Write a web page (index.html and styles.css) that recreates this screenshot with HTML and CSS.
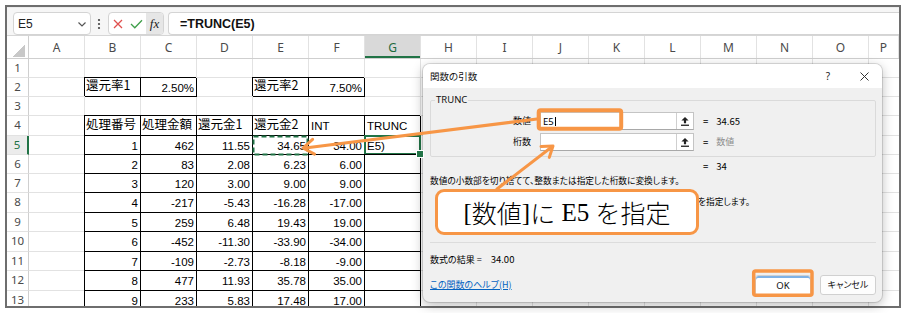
FILE: index.html
```html
<!DOCTYPE html>
<html lang="ja">
<head>
<meta charset="utf-8">
<title>TRUNC</title>
<link rel="stylesheet" href="styles.css">
</head>
<body>
<div class="frame">
  <div class="fbar">
    <div class="namebox"><span>E5</span><svg class="chev" width="8" height="5" viewBox="0 0 8 5"><polyline points="0.5,0.5 4,4 7.5,0.5" fill="none" stroke="#555" stroke-width="1.2"/></svg></div>
    <svg class="dots" width="4" height="12" viewBox="0 0 4 12"><circle cx="2" cy="2" r="1.1" fill="#444"/><circle cx="2" cy="6" r="1.1" fill="#444"/><circle cx="2" cy="10" r="1.1" fill="#444"/></svg>
    <div class="fbtns">
      <svg class="bx-x" width="10" height="10" viewBox="0 0 10 10"><path d="M1 1 L9 9 M9 1 L1 9" stroke="#e0504f" stroke-width="1.3" fill="none"/></svg>
      <svg class="bx-ok" width="13" height="10" viewBox="0 0 13 10"><path d="M1 5 L4.8 8.8 L12 1.2" stroke="#3f9f4a" stroke-width="1.3" fill="none"/></svg>
      <span class="fx">fx</span>
    </div>
    <div class="finput">=TRUNC(E5)</div>
  </div>
  <div class="sheet">
    <div class="hdr">
      <div class="corner"><span class="tri"></span></div>
      <div>A</div><div>B</div><div>C</div><div>D</div><div>E</div><div>F</div><div class="hsel">G</div><div>H</div><div>I</div><div>J</div><div>K</div><div>L</div><div>M</div><div>N</div><div>O</div><div>P</div>
    </div>
    <div class="row"><div class="rh">1</div></div>
    <div class="row"><div class="rh">2</div><div class="c cb bx j">還元率1</div><div class="c cc bx num">2.50%</div><div class="c ce bx j">還元率2</div><div class="c cf bx num">7.50%</div></div>
    <div class="row"><div class="rh">3</div></div>
    <div class="row h20"><div class="rh">4</div><div class="c cb bx j">処理番号</div><div class="c cc bx j">処理金額</div><div class="c cd bx j">還元金1</div><div class="c ce bx j">還元金2</div><div class="c cf bx">INT</div><div class="c cg bx">TRUNC</div></div>
    <div class="row"><div class="rh rsel">5</div><div class="c cb bx num">1</div><div class="c cc bx num">462</div><div class="c cd bx num">11.55</div><div class="c ce bx num">34.65</div><div class="c cf bx num">34.00</div><div class="c cg bx act">E5)</div></div>
    <div class="row"><div class="rh">6</div><div class="c cb bx num">2</div><div class="c cc bx num">83</div><div class="c cd bx num">2.08</div><div class="c ce bx num">6.23</div><div class="c cf bx num">6.00</div><div class="c cg bx"></div></div>
    <div class="row"><div class="rh">7</div><div class="c cb bx num">3</div><div class="c cc bx num">120</div><div class="c cd bx num">3.00</div><div class="c ce bx num">9.00</div><div class="c cf bx num">9.00</div><div class="c cg bx"></div></div>
    <div class="row h20"><div class="rh">8</div><div class="c cb bx num">4</div><div class="c cc bx num">-217</div><div class="c cd bx num">-5.43</div><div class="c ce bx num">-16.28</div><div class="c cf bx num">-17.00</div><div class="c cg bx"></div></div>
    <div class="row"><div class="rh">9</div><div class="c cb bx num">5</div><div class="c cc bx num">259</div><div class="c cd bx num">6.48</div><div class="c ce bx num">19.43</div><div class="c cf bx num">19.00</div><div class="c cg bx"></div></div>
    <div class="row h20"><div class="rh">10</div><div class="c cb bx num">6</div><div class="c cc bx num">-452</div><div class="c cd bx num">-11.30</div><div class="c ce bx num">-33.90</div><div class="c cf bx num">-34.00</div><div class="c cg bx"></div></div>
    <div class="row"><div class="rh">11</div><div class="c cb bx num">7</div><div class="c cc bx num">-109</div><div class="c cd bx num">-2.73</div><div class="c ce bx num">-8.18</div><div class="c cf bx num">-9.00</div><div class="c cg bx"></div></div>
    <div class="row h20"><div class="rh">12</div><div class="c cb bx num">8</div><div class="c cc bx num">477</div><div class="c cd bx num">11.93</div><div class="c ce bx num">35.78</div><div class="c cf bx num">35.00</div><div class="c cg bx"></div></div>
    <div class="row"><div class="rh">13</div><div class="c cb bx num">9</div><div class="c cc bx num">233</div><div class="c cd bx num">5.83</div><div class="c ce bx num">17.48</div><div class="c cf bx num">17.00</div><div class="c cg bx"></div></div>
  </div>
</div>

<div class="dlg">
  <div class="dtitle">
    <span class="dt">関数の引数</span>
    <span class="tb q">?</span>
    <span class="tb"><svg width="9" height="9" viewBox="0 0 9 9"><path d="M0.5 0.5 L8.5 8.5 M8.5 0.5 L0.5 8.5" stroke="#333" stroke-width="1"/></svg></span>
  </div>
  <div class="dbody">
    <div class="grp">
      <span class="glabel">TRUNC</span>
      <div class="arg">
        <span class="al">数値</span>
        <div class="inp"><span class="val">E5</span><i class="caret"></i><span class="cbtn"><svg width="8" height="9" viewBox="0 0 8 9"><path d="M4 0 L7.6 3.6 H5.1 V6.2 H2.9 V3.6 H0.4 Z" fill="#222"/><rect x="0" y="7.6" width="8" height="1.3" fill="#222"/></svg></span></div>
        <span class="eq">=</span><span class="av">34.65</span>
      </div>
      <div class="arg arg2">
        <span class="al">桁数</span>
        <div class="inp"><span class="val"></span><span class="cbtn"><svg width="8" height="9" viewBox="0 0 8 9"><path d="M4 0 L7.6 3.6 H5.1 V6.2 H2.9 V3.6 H0.4 Z" fill="#222"/><rect x="0" y="7.6" width="8" height="1.3" fill="#222"/></svg></span></div>
        <span class="eq">=</span><span class="av gray">数値</span>
      </div>
    </div>
    <div class="res1"><span class="eq0">=</span><span class="av">34</span></div>
    <div class="desc">数値の小数部を切り捨てて、整数または指定した桁数に変換します。</div>
    <div class="desc desc2"><b>桁数</b>　には切り捨て後の桁数を指定します。</div>
    <div class="sep"></div>
    <div class="result">数式の結果 =<span class="rv">34.00</span></div>
    <div class="foot">
      <span class="help">この関数のヘルプ(H)</span>
      <span class="btn okb">OK</span>
      <span class="btn">キャンセル</span>
    </div>
  </div>
</div>

<div class="callout"><span class="lat">[</span>数値<span class="lat">]</span>に<span class="lat"> E5 </span>を指定</div>

<svg class="ov" width="903" height="313" viewBox="0 0 903 313">
  <rect x="253.5" y="136.5" width="54" height="18" fill="none" stroke="#217346" stroke-width="2" stroke-dasharray="5 3"/>
  <g fill="none" stroke="#F79646" stroke-linecap="round" stroke-linejoin="round">
    <line x1="537" y1="119" x2="305" y2="148" stroke-width="3"/>
    <polyline points="314.5,154.1 303,148 312.6,139.3" stroke-width="3"/>
    <line x1="497" y1="189" x2="551" y2="147.5" stroke-width="3"/>
    <polyline points="541,146.4 553,146 549.3,157.4" stroke-width="3"/>
    <rect x="538.7" y="110.3" width="82.5" height="18.5" rx="2" stroke-width="4"/>
    <rect x="753.7" y="271" width="58.3" height="24.3" rx="2" stroke-width="3.5"/>
  </g>
</svg>
</body>
</html>
```

FILE: styles.css
```css
* { box-sizing: border-box; }
html, body { margin: 0; padding: 0; }
body {
  width: 903px;
  height: 313px;
  overflow: hidden;
  position: relative;
  background: #fff;
  font-family: "Noto Sans CJK JP", sans-serif;
  color: #000;
}

.frame {
  margin: 5px 0 0 5px;
  width: 896px;
  height: 303px;
  border: 2px solid #6e6e6e;
  overflow: hidden;
  display: flex;
  flex-direction: column;
  background: #fff;
}

/* formula bar */
.fbar {
  height: 29px;
  flex: none;
  display: flex;
  align-items: flex-start;
  padding: 4px 0 0 6px;
  background: #f6f6f6;
  border-top: 1px solid #ececec;
  border-bottom: 1px solid #d6d6d6;
}
.namebox {
  width: 78px;
  height: 23px;
  background: #fff;
  border: 1px solid #d4d4d4;
  border-radius: 4px;
  display: flex;
  align-items: center;
  justify-content: space-between;
  padding: 0 4px 0 4px;
  font: 12px "Liberation Sans", sans-serif;
  color: #222;
}
.chev { margin-top: 1px; }
.dots { margin: 6px 0 0 6px; }
.fbtns {
  margin-left: 7px;
  width: 56px;
  height: 23px;
  background: #fff;
  border: 1px solid #d4d4d4;
  border-radius: 4px;
  display: flex;
  align-items: center;
  padding-left: 4px;
}
.bx-ok { margin-left: 7px; }
.fx {
  margin-left: auto;
  width: 17px;
  align-self: stretch;
  background: #e6e6e6;
  border-radius: 0 3px 3px 0;
  display: flex;
  align-items: center;
  justify-content: center;
  font: italic 13px "Liberation Serif", serif;
  color: #222;
}
.finput {
  margin-left: 4px;
  flex: 1;
  height: 23px;
  background: #fff;
  border: 1px solid #d4d4d4;
  border-right: none;
  border-radius: 4px 0 0 4px;
  padding-left: 11px;
  display: flex;
  align-items: center;
  font: bold 12.5px "Liberation Sans", sans-serif;
  color: #111;
}

/* sheet */
.sheet {
  flex: 1;
  overflow: hidden;
  display: flex;
  flex-direction: column;
}
.hdr, .row {
  display: grid;
  grid-template-columns: 22px repeat(15, 56px) 1fr;
  flex: none;
}
.hdr {
  height: 23px;
  border-bottom: 1px solid #cfcfcf;
  background: #fff;
}
.hdr > div {
  border-right: 1px solid #e2e2e2;
  display: flex;
  align-items: center;
  justify-content: center;
  padding-top: 1px;
  font: 12px "Noto Sans", sans-serif;
  color: #4a4a4a;
}
.hdr > .corner {
  align-items: flex-end;
  justify-content: flex-end;
  padding: 0 3px 1px 0;
  border-right-color: #cfcfcf;
}
.tri {
  width: 12px;
  height: 12px;
  background: linear-gradient(to bottom right, transparent 50%, #c8c8c8 50%);
}
.hdr > .hsel {
  background: #d9d9d9;
  color: #1d6b3f;
  box-shadow: inset 0 -2px 0 #217346;
}
.row {
  height: 19px;
  background:
    linear-gradient(#e2e2e2, #e2e2e2) 0 100% / 100% 1px no-repeat,
    repeating-linear-gradient(to right, transparent 0 55px, #e2e2e2 55px 56px) 22px 0 / 100% 100%;
}
.row.h20 { height: 20px; }
.row > * { grid-row: 1; }
.rh {
  grid-column: 1;
  background: #fff;
  border-right: 1px solid #cfcfcf;
  border-bottom: 1px solid #e2e2e2;
  display: flex;
  align-items: flex-end;
  justify-content: center;
  padding-bottom: 3px;
  font: 11.5px/12px "Noto Sans", sans-serif;
  color: #4a4a4a;
}
.h20 .rh { padding-bottom: 4px; }
.rh.rsel {
  background: #ececec;
  color: #217346;
  border-right: 2px solid #217346;
}

.c {
  display: flex;
  align-items: flex-end;
  padding: 0 2px 2px 2px;
  font: 11.5px/12px "Liberation Sans", sans-serif;
  white-space: nowrap;
  min-width: 0;
  position: relative;
}
.h20 .c { padding-bottom: 3px; }
.c.num { justify-content: flex-end; }
.c.j, .h20 .c.j {
  font: 12.5px/12px "Noto Sans CJK JP", sans-serif;
  padding-bottom: 5px;
  padding-left: 1px;
}
.cb { grid-column: 3; }
.cc { grid-column: 4; }
.cd { grid-column: 5; }
.ce { grid-column: 6; }
.cf { grid-column: 7; }
.cg { grid-column: 8; }
.bx {
  border-right: 1px solid #000;
  border-bottom: 1px solid #000;
  box-shadow: -1px -1px 0 #000;
}
.act::after {
  content: "";
  position: absolute;
  top: -1px;
  left: -1px;
  right: -1px;
  bottom: -1px;
  border: 2px solid #217346;
}
.act::before {
  content: "";
  position: absolute;
  right: -4px;
  bottom: -4px;
  width: 6px;
  height: 6px;
  background: #217346;
  border: 1px solid #fff;
  z-index: 1;
}

/* dialog */
.dlg {
  position: absolute;
  left: 423px;
  top: 64px;
  width: 459px;
  height: 238px;
  border-radius: 7px;
  background: #f0f0f0;
  box-shadow: 0 0 0 1px rgba(0, 0, 0, 0.12), 0 3px 12px rgba(0, 0, 0, 0.28);
  overflow: hidden;
  display: flex;
  flex-direction: column;
  font-family: "Noto Sans CJK JP", sans-serif;
  font-feature-settings: "palt";
}
.dtitle {
  height: 24px;
  flex: none;
  background: #fff;
  display: flex;
  align-items: center;
  padding-left: 7px;
  font-size: 9.5px;
  color: #111;
}
.dt { margin-right: auto; }
.tb {
  width: 36px;
  display: flex;
  justify-content: center;
  align-items: center;
}
.tb.q { font: 10px "Noto Sans", sans-serif; color: #222; }
.dbody {
  flex: 1;
  display: flex;
  flex-direction: column;
  padding: 0 6px 0 7px;
  font-size: 9px;
  line-height: 14px;
}
.grp {
  position: relative;
  margin-top: 12px;
  height: 57px;
  border: 1px solid #dadada;
  border-radius: 2px;
  padding-top: 11px;
}
.glabel {
  position: absolute;
  top: -8px;
  left: 4px;
  padding: 0 1px;
  background: #f0f0f0;
  font: 9.5px "Noto Sans", sans-serif;
  color: #111;
}
.arg {
  display: flex;
  align-items: center;
  height: 18px;
}
.arg2 { margin-top: 3px; }
.al {
  width: 101px;
  text-align: right;
  padding-right: 1px;
}
.inp {
  margin-left: 8px;
  width: 154px;
  height: 18px;
  background: #fff;
  border: 1px solid #c4c4c4;
  border-bottom-color: #a8a8a8;
  display: flex;
  align-items: center;
  padding-left: 2px;
}
.val { font: 9.5px "Noto Sans", sans-serif; color: #000; }
.caret {
  width: 1px;
  height: 9px;
  background: #000;
  margin-left: 1px;
}
.cbtn {
  margin-left: auto;
  width: 17px;
  align-self: stretch;
  border-left: 1px solid #cfcfcf;
  display: flex;
  align-items: center;
  justify-content: center;
}
.eq { margin-left: 9px; font-size: 9.5px; }
.av { margin-left: 8px; font-size: 9.5px; }
.av.gray { color: #8c8c8c; font-size: 9px; }
.res1 {
  margin-top: 2px;
  height: 14px;
  padding-left: 273px;
  display: flex;
  align-items: center;
}
.eq0 { font-size: 9.5px; }
.desc {
  margin-top: 1px;
  height: 14px;
  white-space: nowrap;
  font-size: 8.7px;
}
.desc2 {
  margin-top: 7px;
  text-align: right;
  padding-right: 126px;
}
.desc2 b { font-weight: bold; }
.sep {
  margin-top: 33px;
  height: 1px;
  background: #dcdcdc;
  flex: none;
}
.result { margin-top: 9px; height: 14px; }
.rv { margin-left: 9px; font-size: 9.5px; }
.foot {
  margin-top: 5px;
  height: 28px;
  display: flex;
  align-items: center;
}
.help {
  color: #0563c1;
  text-decoration: underline;
  margin-right: auto;
}
.btn {
  width: 56px;
  height: 20px;
  background: #fdfdfd;
  border: 1px solid #d0d0d0;
  border-radius: 3px;
  display: flex;
  align-items: center;
  justify-content: center;
  font-size: 9px;
  color: #111;
}
.btn + .btn { margin-left: 9px; }
.okb {
  height: 21px;
  background: #fff;
  box-shadow: inset 0 2px 0 #7fb2e5;
  font: 9.5px "Noto Sans", sans-serif;
}

/* callout */
.callout {
  position: absolute;
  left: 435px;
  top: 189px;
  width: 264px;
  height: 46px;
  background: #fff;
  border: 3px solid #F79646;
  border-radius: 9px;
  display: flex;
  align-items: center;
  justify-content: center;
  font: 300 25px/1 "Noto Sans CJK JP", sans-serif;
  color: #000;
  white-space: pre;
}
.lat { font-family: "Liberation Serif", serif; font-weight: 400; }

.ov {
  position: absolute;
  left: 0;
  top: 0;
  pointer-events: none;
}
```
